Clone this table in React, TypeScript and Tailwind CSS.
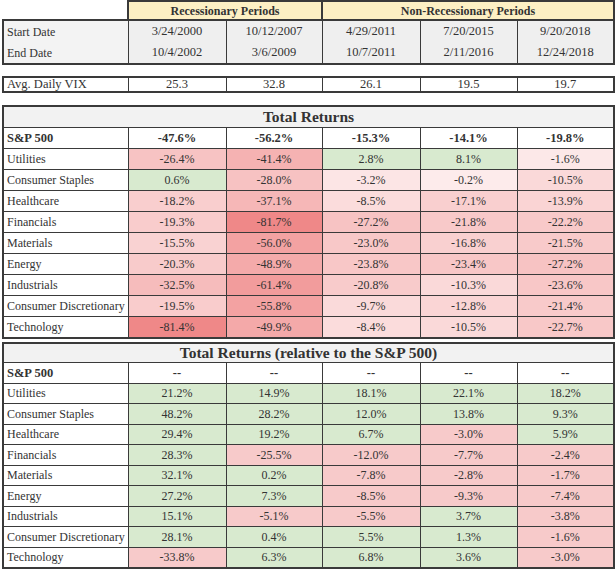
import React from "react";

const COLS = [125, 98, 96, 98, 97, 97];

const sectors = [
  "Utilities",
  "Consumer Staples",
  "Healthcare",
  "Financials",
  "Materials",
  "Energy",
  "Industrials",
  "Consumer Discretionary",
  "Technology",
];

const total: number[][] = [
  [-26.4, -41.4, 2.8, 8.1, -1.6],
  [0.6, -28.0, -3.2, -0.2, -10.5],
  [-18.2, -37.1, -8.5, -17.1, -13.9],
  [-19.3, -81.7, -27.2, -21.8, -22.2],
  [-15.5, -56.0, -23.0, -16.8, -21.5],
  [-20.3, -48.9, -23.8, -23.4, -27.2],
  [-32.5, -61.4, -20.8, -10.3, -23.6],
  [-19.5, -55.8, -9.7, -12.8, -21.4],
  [-81.4, -49.9, -8.4, -10.5, -22.7],
];

const rel: number[][] = [
  [21.2, 14.9, 18.1, 22.1, 18.2],
  [48.2, 28.2, 12.0, 13.8, 9.3],
  [29.4, 19.2, 6.7, -3.0, 5.9],
  [28.3, -25.5, -12.0, -7.7, -2.4],
  [32.1, 0.2, -7.8, -2.8, -1.7],
  [27.2, 7.3, -8.5, -9.3, -7.4],
  [15.1, -5.1, -5.5, 3.7, -3.8],
  [28.1, 0.4, 5.5, 1.3, -1.6],
  [-33.8, 6.3, 6.8, 3.6, -3.0],
];

function heat(v: number): string {
  if (v >= 0) return "#d8eacf";
  const t = Math.min(1, Math.pow(-v / 81.7, 0.8));
  const a = [253, 236, 236];
  const b = [239, 136, 136];
  const c = a.map((x, i) => Math.round(x + (b[i] - x) * t));
  return `rgb(${c[0]},${c[1]},${c[2]})`;
}

function relColor(v: number): string {
  return v >= 0 ? "#d8eacf" : "#f7caca";
}

const fmt = (v: number) => `${v.toFixed(1)}%`;

const font = { fontFamily: '"Liberation Serif", "Times New Roman", serif' };

function Cols() {
  return (
    <colgroup>
      {COLS.map((w, i) => (
        <col key={i} style={{ width: w }} />
      ))}
    </colgroup>
  );
}

function DataTable({
  title,
  spRow,
  data,
  color,
  titleH,
  rowH,
}: {
  title: string;
  spRow: string[];
  data: number[][];
  color: (v: number) => string;
  titleH: string;
  rowH: string;
}) {
  return (
    <table className="table-fixed border-collapse border-2 border-[#3a3a3a] w-[611px]">
      <Cols />
      <tbody>
        <tr className={titleH}>
          <td
            colSpan={6}
            className="bg-[#f2f2f2] border border-[#3a3a3a] text-center font-bold text-[15.5px] leading-none p-0"
          >
            {title}
          </td>
        </tr>
        <tr className={rowH}>
          <td className="border border-[#3a3a3a] pl-[3px] font-bold text-[12.5px] leading-none p-0">S&amp;P 500</td>
          {spRow.map((s, i) => (
            <td key={i} className="border border-[#3a3a3a] text-center font-bold text-[12.5px] leading-none p-0">
              {s}
            </td>
          ))}
        </tr>
        {sectors.map((name, r) => (
          <tr key={name} className={rowH}>
            <td className="border border-[#3a3a3a] pl-[3px] text-[12px] leading-none p-0 whitespace-nowrap">{name}</td>
            {data[r].map((v, c) => (
              <td
                key={c}
                className="border border-[#3a3a3a] text-center text-[12px] leading-none p-0"
                style={{ backgroundColor: color(v) }}
              >
                {fmt(v)}
              </td>
            ))}
          </tr>
        ))}
      </tbody>
    </table>
  );
}

export default function App() {
  return (
    <div className="w-[616px] h-[569px] bg-white text-[#333333] pl-[2px] overflow-hidden" style={font}>
      <table className="table-fixed border-collapse w-[611px]">
        <Cols />
        <tbody>
          <tr className="h-[19px]">
            <td className="p-0 border-0"></td>
            <td
              colSpan={2}
              className="bg-[#fdf0c4] border-2 border-[#3a3a3a] text-center font-bold text-[12px] leading-none p-0"
            >
              Recessionary Periods
            </td>
            <td
              colSpan={3}
              className="bg-[#fdf0c4] border-2 border-[#3a3a3a] text-center font-bold text-[12px] leading-none p-0"
            >
              Non-Recessionary Periods
            </td>
          </tr>
          <tr className="h-[22px]">
            <td className="bg-[#f3f3f3] border-2 border-b-0 border-r border-[#3a3a3a] pl-[3px] text-[12px] leading-none p-0">
              Start Date
            </td>
            {["3/24/2000", "10/12/2007", "4/29/2011", "7/20/2015", "9/20/2018"].map((d, i) => (
              <td
                key={i}
                className={`bg-[#efefef] border-t-2 border-x border-[#3a3a3a] text-center text-[12.5px] leading-none p-0 ${
                  i === 4 ? "border-r-2" : ""
                }`}
              >
                {d}
              </td>
            ))}
          </tr>
          <tr className="h-[22px]">
            <td className="bg-[#f3f3f3] border-2 border-t-0 border-r border-[#3a3a3a] pl-[3px] text-[12px] leading-none p-0">
              End Date
            </td>
            {["10/4/2002", "3/6/2009", "10/7/2011", "2/11/2016", "12/24/2018"].map((d, i) => (
              <td
                key={i}
                className={`bg-[#efefef] border-b-2 border-x border-[#3a3a3a] text-center text-[12.5px] leading-none p-0 ${
                  i === 4 ? "border-r-2" : ""
                }`}
              >
                {d}
              </td>
            ))}
          </tr>
        </tbody>
      </table>

      <div className="h-[11px]" />

      <table className="table-fixed border-collapse border-2 border-[#3a3a3a] w-[611px]">
        <Cols />
        <tbody>
          <tr className="h-[14px]">
            <td className="border border-[#3a3a3a] pl-[3px] text-[12.5px] leading-none p-0">Avg. Daily VIX</td>
            {["25.3", "32.8", "26.1", "19.5", "19.7"].map((v, i) => (
              <td key={i} className="border border-[#3a3a3a] text-center text-[12.5px] leading-none p-0">
                {v}
              </td>
            ))}
          </tr>
        </tbody>
      </table>

      <div className="h-[12px]" />

      <DataTable
        title="Total Returns"
        spRow={["-47.6%", "-56.2%", "-15.3%", "-14.1%", "-19.8%"]}
        data={total}
        color={heat}
        titleH="h-[22px]"
        rowH="h-[21px]"
      />

      <div className="h-[3px]" />

      <DataTable
        title="Total Returns (relative to the S&P 500)"
        spRow={["--", "--", "--", "--", "--"]}
        data={rel}
        color={relColor}
        titleH="h-[20px]"
        rowH="h-[20.5px]"
      />
    </div>
  );
}
